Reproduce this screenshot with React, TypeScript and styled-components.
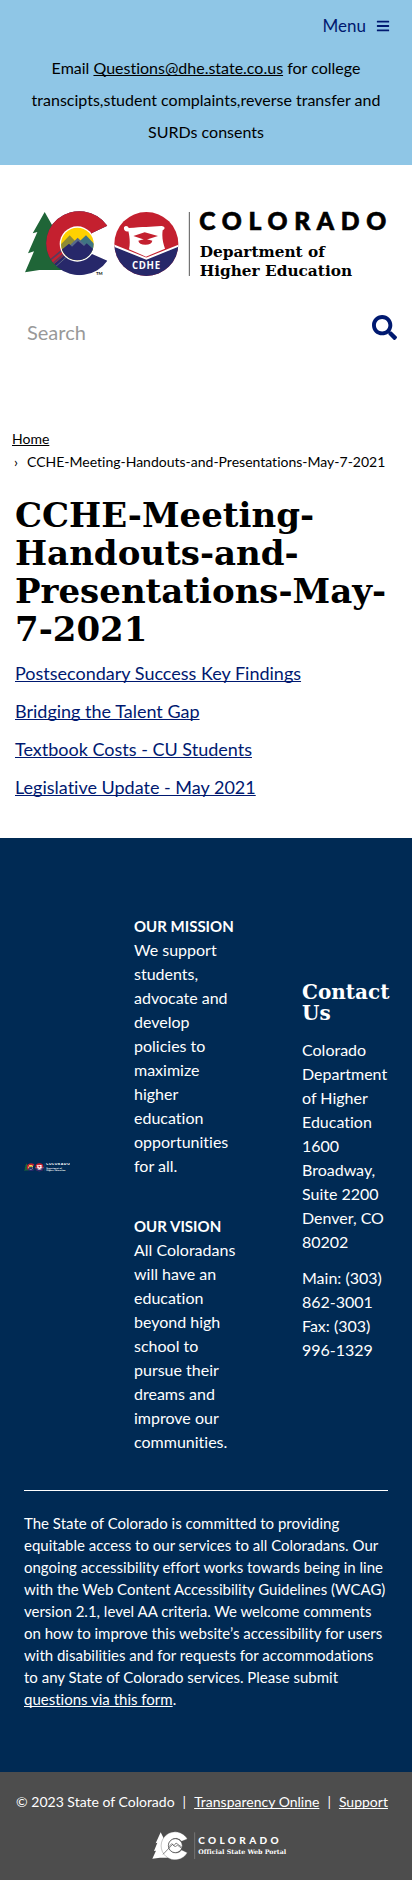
import React, { useId } from "react";
import styled, { createGlobalStyle } from "styled-components";
import { FaBars, FaSearch } from "react-icons/fa";

const sans = `Lato, "Trebuchet MS", "Open Sans", sans-serif`;
const slab = `"Museo Slab", "DejaVu Serif", serif`;
const navy = "#002a54";
const linkBlue = "#001970";

const GlobalStyle = createGlobalStyle`
  *, *::before, *::after { box-sizing: border-box; }
  body { margin: 0; background: #fff; color: #000; font-family: ${sans}; font-size: 16px; line-height: 24px; font-variant-ligatures: none; }
  h1, h2, h3, p, ul, ol { margin: 0; padding: 0; }
  ul, ol { list-style: none; }
  a { color: inherit; text-decoration: underline; text-decoration-skip-ink: none; }
`;

const TopBar = styled.header`
  background: #8fc6e6;
  padding: 12px 22px 17px;
  display: flex;
  flex-direction: column;
`;

const MenuButton = styled.button`
  align-self: flex-end;
  display: flex;
  align-items: center;
  gap: 10px;
  padding: 0;
  border: 0;
  background: none;
  color: ${linkBlue};
  font: 17px/28px ${sans};
`;

const Notice = styled.p`
  margin-top: 12px;
  text-align: center;
  font-size: 16px;
  line-height: 32px;
`;

const Brand = styled.a`
  display: block;
  padding: 45px 24px 0;
`;

const FluidSvg = styled.svg`
  display: block;
  width: 100%;
  height: auto;
`;

const SearchForm = styled.form`
  display: flex;
  align-items: flex-start;
  padding: 34px 15px 0 27px;
`;

const HiddenLabel = styled.label`
  position: absolute;
  width: 1px;
  height: 1px;
  overflow: hidden;
  clip-path: inset(50%);
`;

const SearchInput = styled.input`
  flex: 1;
  min-width: 0;
  margin-top: 3px;
  padding: 0;
  border: 0;
  background: none;
  font: 20px/28px ${sans};
  &::placeholder { color: #999; opacity: 1; }
`;

const SearchButton = styled.button`
  display: flex;
  padding: 0;
  border: 0;
  background: none;
  color: ${linkBlue};
  font-size: 25px;
`;

const Breadcrumb = styled.ol`
  padding: 81px 12px 0;
  font-size: 14px;
  line-height: 23px;
`;

const Crumb = styled.li`
  display: flex;
`;

const CrumbMark = styled.span`
  width: 15px;
  padding-left: 2px;
`;

const Main = styled.main`
  padding: 23px 15px 32px;
`;

const PageTitle = styled.h1`
  font: bold 34px/38px ${slab};
`;

const DocumentList = styled.ul`
  padding-top: 6px;
  color: ${linkBlue};
  font-size: 18px;
  line-height: 38px;
`;

const SiteFooter = styled.footer`
  background: ${navy};
  color: #fff;
  padding: 76px 24px 62px;
`;

const FooterColumns = styled.div`
  display: grid;
  grid-template-columns: 110fr 168fr 86fr;
  padding-bottom: 36px;
  border-bottom: 1px solid #fff;
`;

const FooterLogo = styled.div`
  align-self: center;
  width: 46px;
  padding-bottom: 32px;
  box-sizing: content-box;
`;

const Statements = styled.div`
  display: flex;
  flex-direction: column;
  gap: 36px;
  padding-right: 62px;
`;

const StatementTitle = styled.h3`
  font-size: 15px;
  line-height: 24px;
`;

const Contact = styled.address`
  align-self: center;
  display: flex;
  flex-direction: column;
  gap: 12px;
  min-width: 0;
  padding-bottom: 24px;
  font-style: normal;
`;

const ContactTitle = styled.h2`
  font: bold 20px/21px ${slab};
  padding-bottom: 2px;
`;

const AccessNote = styled.p`
  padding-top: 21px;
  font-size: 15px;
  line-height: 22px;
`;

const LegalBar = styled.div`
  background: #4d4d4d;
  color: #fff;
  padding: 19px 18px 21px 10px;
  display: flex;
  flex-direction: column;
  align-items: center;
  gap: 18px;
`;

const LegalLinks = styled.div`
  display: flex;
  flex-wrap: wrap;
  justify-content: center;
  gap: 0 8px;
  font-size: 14px;
  line-height: 22px;
`;

const PortalLink = styled.a`
  width: 138px;
  margin-left: 38px;
`;

function DepartmentLogo({ ink = "#000" }: { ink?: string }) {
  const id = useId();
  return (
    <FluidSvg viewBox="72 60 1092 212" role="img" aria-label="Colorado Department of Higher Education">
      <defs>
        <clipPath id={`${id}sun`}><circle cx="232" cy="162" r="49" /></clipPath>
        <clipPath id={`${id}seal`}><circle cx="439" cy="162" r="96" /></clipPath>
        <clipPath id={`${id}c`}>
          <path d="M322 107A100 96 0 1 0 322 212L276 192V129Z" />
        </clipPath>
      </defs>
      <path fill="#1f6537" d="M134 66L170 130L200 240L118 240L75 247L102 184L84 190L112 126L98 130Z" />
      <g clipPath={`url(#${id}c)`}>
        <path fill="#27286a" d="M120 60H340V270H120Z" />
        <path fill="#c4202f" d="M120 60H340V162H232L158 226L120 226Z" />
        <path stroke="#5b3a5c" strokeWidth="5" d="M145 215L187 180M152 226L196 188" />
        <path stroke="#5e6485" strokeWidth="3" d="M160 236L205 196" />
      </g>
      <circle cx="232" cy="162" r="53" fill="#fff" />
      <g clipPath={`url(#${id}sun)`}>
        <path fill="#ffd100" d="M180 110H290V215H180Z" />
        <path fill="#8e8b34" d="M180 166L209 136L247 176L230 210H180Z" />
        <path fill="#3f7482" d="M226 166L258 136L290 170V215H240Z" />
        <path fill="#57698a" d="M205 170L233 143L262 172L250 200Z" />
        <path fill="#27286a" d="M178 185L207 161L216 170L234 153L252 168L260 160L288 185V220H178Z" />
      </g>
      <text x="288" y="256" fontFamily="Lato, sans-serif" fontSize="13" fontWeight="700" fill={ink}>TM</text>
      <g clipPath={`url(#${id}seal)`}>
        <path fill="#c4202f" d="M340 60H540V270H340Z" />
        <path fill="#27286a" stroke="#fff" strokeWidth="6" d="M330 162L439 206L548 162V280H330Z" />
      </g>
      <path fill="#fff" d="M372 112C376 106 384 108 386 114C430 111 450 110 484 108C496 108 496 118 488 121C485 142 489 158 495 176L438 200L387 178C391 160 389 140 385 124C377 127 370 120 372 112Z" />
      <path fill="#c4202f" d="M400 138L434 127L474 138L436 150ZM415 152Q436 143 457 152Q455 164 436 164Q417 164 415 152Z" />
      <text x="439" y="236" textAnchor="middle" fontFamily="Open Sans, sans-serif" fontSize="29" fontWeight="700" letterSpacing="2" fill="#fff">CDHE</text>
      <path stroke={ink} strokeWidth="2" d="M568 66V258" />
      <text x="598" y="119" fontFamily="Lato, sans-serif" fontSize="74" fontWeight="900" letterSpacing="20" fill={ink} stroke={ink} strokeWidth="2">COLORADO</text>
      <g fontFamily='"Museo Slab", "DejaVu Serif", serif' fontSize="46" fontWeight="700" fill={ink}>
        <text x="599" y="200">Department of</text>
        <text x="599" y="257">Higher Education</text>
      </g>
    </FluidSvg>
  );
}

function PortalLogo() {
  return (
    <FluidSvg viewBox="22 38 414 90" role="img" aria-label="Colorado Official State Web Portal">
      <path fill="#fff" d="M48 42L60 66L70 118H46L23 121L34 97L28 98L38 73L33 75Z" />
      <path fill="#fff" stroke="#4d4d4d" strokeWidth="1" d="M128 62A42 42 0 1 0 128 103L111 95A22 22 0 1 1 111 69Z" />
      <circle cx="92" cy="82" r="21" fill="#fff" stroke="#4d4d4d" strokeWidth="2" />
      <path fill="none" stroke="#4d4d4d" strokeWidth="2" d="M55 108L84 78L92 86L98 80L112 91M72 86L81 76L88 82L94 74L111 86" />
      <path stroke="#8a8a8a" strokeWidth="2" d="M150 42V122" />
      <text x="161" y="76" fontFamily="Lato, sans-serif" fontSize="30" fontWeight="900" letterSpacing="10" fill="#fff">COLORADO</text>
      <text x="161" y="108" fontFamily='"DejaVu Serif", serif' fontSize="19" fontWeight="700" fill="#fff">Official State Web Portal</text>
    </FluidSvg>
  );
}

const documents = [
  "Postsecondary Success Key Findings",
  "Bridging the Talent Gap",
  "Textbook Costs - CU Students",
  "Legislative Update - May 2021",
];

export default function App() {
  return (
    <>
      <GlobalStyle />
      <TopBar>
        <MenuButton type="button">
          Menu
          <FaBars size={14} aria-hidden />
        </MenuButton>
        <Notice>
          Email <a href="mailto:Questions@dhe.state.co.us">Questions@dhe.state.co.us</a> for college
          transcipts,student complaints,reverse transfer and SURDs consents
        </Notice>
      </TopBar>

      <Brand href="#home">
        <DepartmentLogo />
      </Brand>

      <SearchForm role="search">
        <HiddenLabel htmlFor="site-search">Search</HiddenLabel>
        <SearchInput id="site-search" type="text" placeholder="Search" />
        <SearchButton type="submit" aria-label="Search">
          <FaSearch aria-hidden />
        </SearchButton>
      </SearchForm>

      <nav aria-label="Breadcrumb">
        <Breadcrumb>
          <Crumb><a href="#home">Home</a></Crumb>
          <Crumb><CrumbMark>›</CrumbMark>CCHE-Meeting-Handouts-and-Presentations-May-7-2021</Crumb>
        </Breadcrumb>
      </nav>

      <Main>
        <PageTitle>CCHE-Meeting-Handouts-and-Presentations-May-7-2021</PageTitle>
        <DocumentList>
          {documents.map((title) => (
            <li key={title}><a href="#document">{title}</a></li>
          ))}
        </DocumentList>
      </Main>

      <SiteFooter>
        <FooterColumns>
          <FooterLogo><DepartmentLogo ink="#fff" /></FooterLogo>
          <Statements>
            <section>
              <StatementTitle>OUR MISSION</StatementTitle>
              <p>We support students, advocate and develop policies to maximize higher education opportunities for all.</p>
            </section>
            <section>
              <StatementTitle>OUR VISION</StatementTitle>
              <p>All Coloradans will have an education beyond high school to pursue their dreams and improve our communities.</p>
            </section>
          </Statements>
          <Contact>
            <ContactTitle>Contact Us</ContactTitle>
            <p>Colorado Department of Higher Education<br />1600 Broadway, Suite 2200<br />Denver, CO 80202</p>
            <p>Main: (303) 862-3001<br />Fax: (303) 996-1329</p>
          </Contact>
        </FooterColumns>
        <AccessNote>
          The State of Colorado is committed to providing equitable access to our services to all Coloradans. Our
          ongoing accessibility effort works towards being in line with the Web Content Accessibility Guidelines
          (WCAG) version 2.1, level AA criteria. We welcome comments on how to improve this website’s accessibility
          for users with disabilities and for requests for accommodations to any State of Colorado services. Please
          submit <a href="#form">questions via this form</a>.
        </AccessNote>
      </SiteFooter>

      <LegalBar>
        <LegalLinks>
          <span>© 2023 State of Colorado</span>
          <span>|</span>
          <a href="#transparency">Transparency Online</a>
          <span>|</span>
          <a href="#support">Support</a>
        </LegalLinks>
        <PortalLink href="#portal"><PortalLogo /></PortalLink>
      </LegalBar>
    </>
  );
}
